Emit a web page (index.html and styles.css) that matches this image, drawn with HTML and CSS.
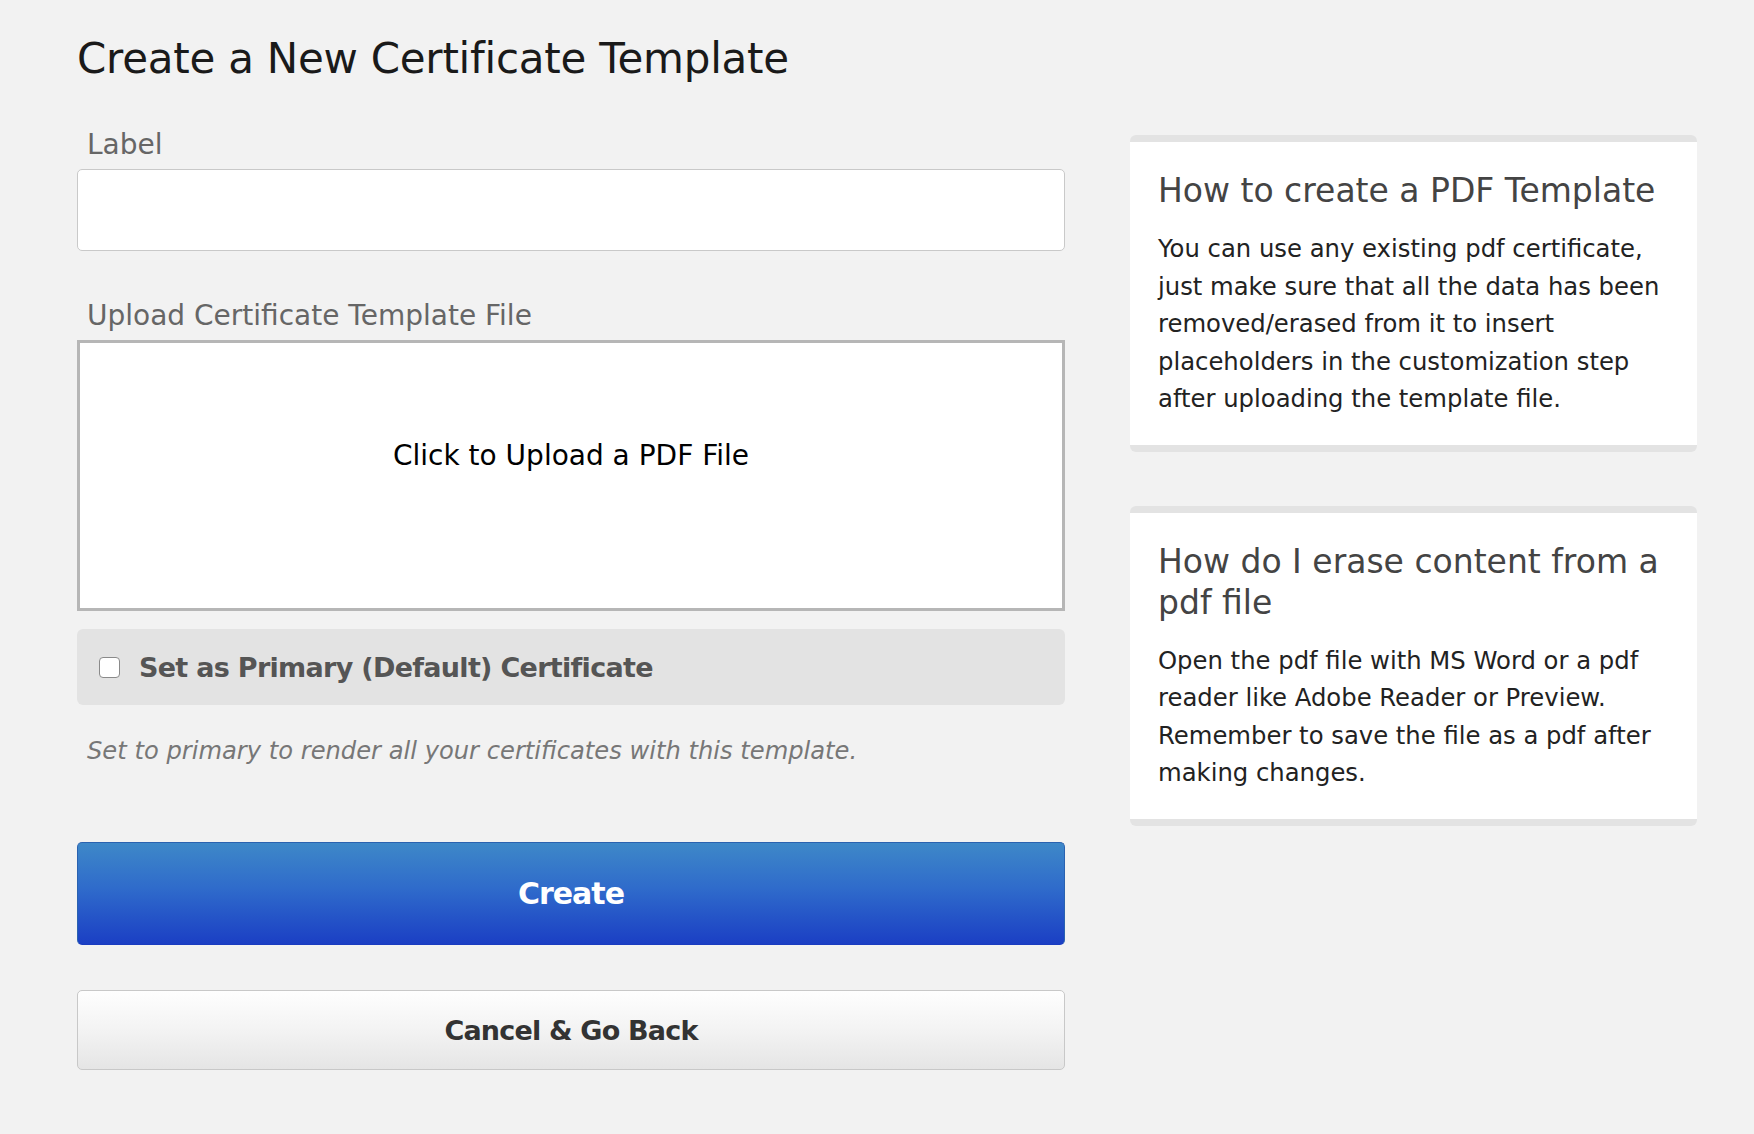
FILE: index.html
```html
<!DOCTYPE html>
<html lang="en">
<head>
<meta charset="utf-8">
<title>Create a New Certificate Template</title>
<link rel="stylesheet" href="styles.css">
</head>
<body>
<div class="page">
  <h1 class="page-title">Create a New Certificate Template</h1>
  <div class="layout">
    <form class="form-col">
      <label class="field-label" for="label">Label</label>
      <input class="text-input" id="label" type="text">

      <label class="field-label upload-label">Upload Certificate Template File</label>
      <div class="upload-box">Click to Upload a PDF File</div>

      <label class="primary-panel">
        <input class="check" type="checkbox">
        <span class="primary-text">Set as Primary (Default) Certificate</span>
      </label>
      <p class="help-text">Set to primary to render all your certificates with this template.</p>

      <button type="button" class="btn btn-primary">Create</button>
      <button type="button" class="btn btn-secondary">Cancel &amp; Go Back</button>
    </form>

    <aside class="side-col">
      <section class="card">
        <h2 class="card-title">How to create a PDF Template</h2>
        <p class="card-text">You can use any existing pdf certificate, just make sure that all the data has been removed/erased from it to insert placeholders in the customization step after uploading the template file.</p>
      </section>
      <section class="card">
        <h2 class="card-title">How do I erase content from a pdf file</h2>
        <p class="card-text">Open the pdf file with MS Word or a pdf reader like Adobe Reader or Preview. Remember to save the file as a pdf after making changes.</p>
      </section>
    </aside>
  </div>
</div>
</body>
</html>
```

FILE: styles.css
```css
html, body {
  margin: 0;
  padding: 0;
  background: #f2f2f2;
}

body {
  font-family: "DejaVu Sans", "Liberation Sans", sans-serif;
  color: #222;
}

.page {
  padding: 34px 57px 0 77px;
}

.page-title {
  margin: 0;
  font-size: 42px;
  line-height: 49px;
  font-weight: normal;
  letter-spacing: -0.25px;
  color: #1a1a1a;
}

.layout {
  display: grid;
  grid-template-columns: 988px 567px;
  column-gap: 65px;
  margin-top: 45px;
  align-items: start;
}

.form-col {
  display: flex;
  flex-direction: column;
  margin: 0;
}

.field-label {
  display: block;
  padding-left: 10px;
  font-size: 28px;
  line-height: 33px;
  color: #666;
  margin-bottom: 8px;
}

.text-input {
  box-sizing: border-box;
  height: 82px;
  width: 100%;
  margin: 0;
  border: 1px solid #c9c9c9;
  border-radius: 5px;
  background: #fff;
  font-family: inherit;
  font-size: 27px;
  padding: 0 16px;
}

.upload-label {
  margin-top: 48px;
}

.upload-box {
  box-sizing: border-box;
  height: 271px;
  border: 3px solid #b6b6b6;
  background: #fff;
  padding-top: 96px;
  text-align: center;
  font-size: 28px;
  line-height: 33.6px;
  color: #000;
}

.primary-panel {
  box-sizing: border-box;
  margin-top: 18px;
  height: 76px;
  display: flex;
  align-items: center;
  gap: 19px;
  padding: 2px 0 0 22px;
  background: #e3e3e3;
  border-radius: 6px;
}

.check {
  appearance: none;
  -webkit-appearance: none;
  box-sizing: border-box;
  margin: 0;
  width: 21px;
  height: 21px;
  border: 1.5px solid #8a8a8a;
  border-radius: 4px;
  background: #fff;
  flex: none;
  position: relative;
  top: -1px;
}

.primary-text {
  font-size: 27px;
  font-weight: bold;
  letter-spacing: -0.7px;
  color: #555;
  line-height: 32px;
}

.help-text {
  margin: 32px 0 0;
  padding-left: 10px;
  font-size: 24.2px;
  line-height: 29px;
  font-style: italic;
  color: #777;
}

.btn {
  box-sizing: border-box;
  width: 100%;
  margin: 0;
  font-family: inherit;
  font-weight: bold;
  border-radius: 5px;
  cursor: pointer;
  text-align: center;
}

.btn-primary {
  margin-top: 76px;
  height: 103px;
  border: 1px solid #2a62b0;
  border-bottom-color: #1a3cbf;
  background: linear-gradient(to bottom, #3e88c8 0%, #2f6bcb 45%, #1b3fc4 100%);
  color: #fff;
  font-size: 30px;
  letter-spacing: -1px;
}

.btn-secondary {
  margin-top: 45px;
  height: 80px;
  border: 1px solid #c8c8c8;
  background: linear-gradient(to bottom, #fefefe 0%, #f3f3f3 50%, #e5e5e5 100%);
  color: #333;
  font-size: 27px;
  letter-spacing: -0.8px;
}

.side-col {
  display: flex;
  flex-direction: column;
  gap: 54px;
  padding-top: 7px;
}

.card {
  background: #fff;
  border-top: 7px solid #e3e3e3;
  border-bottom: 7px solid #e3e3e3;
  border-radius: 6px;
  padding: 28px 28px 27px 28px;
}

.card-title {
  margin: 0;
  font-size: 33px;
  line-height: 41px;
  font-weight: normal;
  color: #444;
}

.card-text {
  margin: 19px 0 0;
  font-size: 24.3px;
  line-height: 37.5px;
  color: #222;
}
```
